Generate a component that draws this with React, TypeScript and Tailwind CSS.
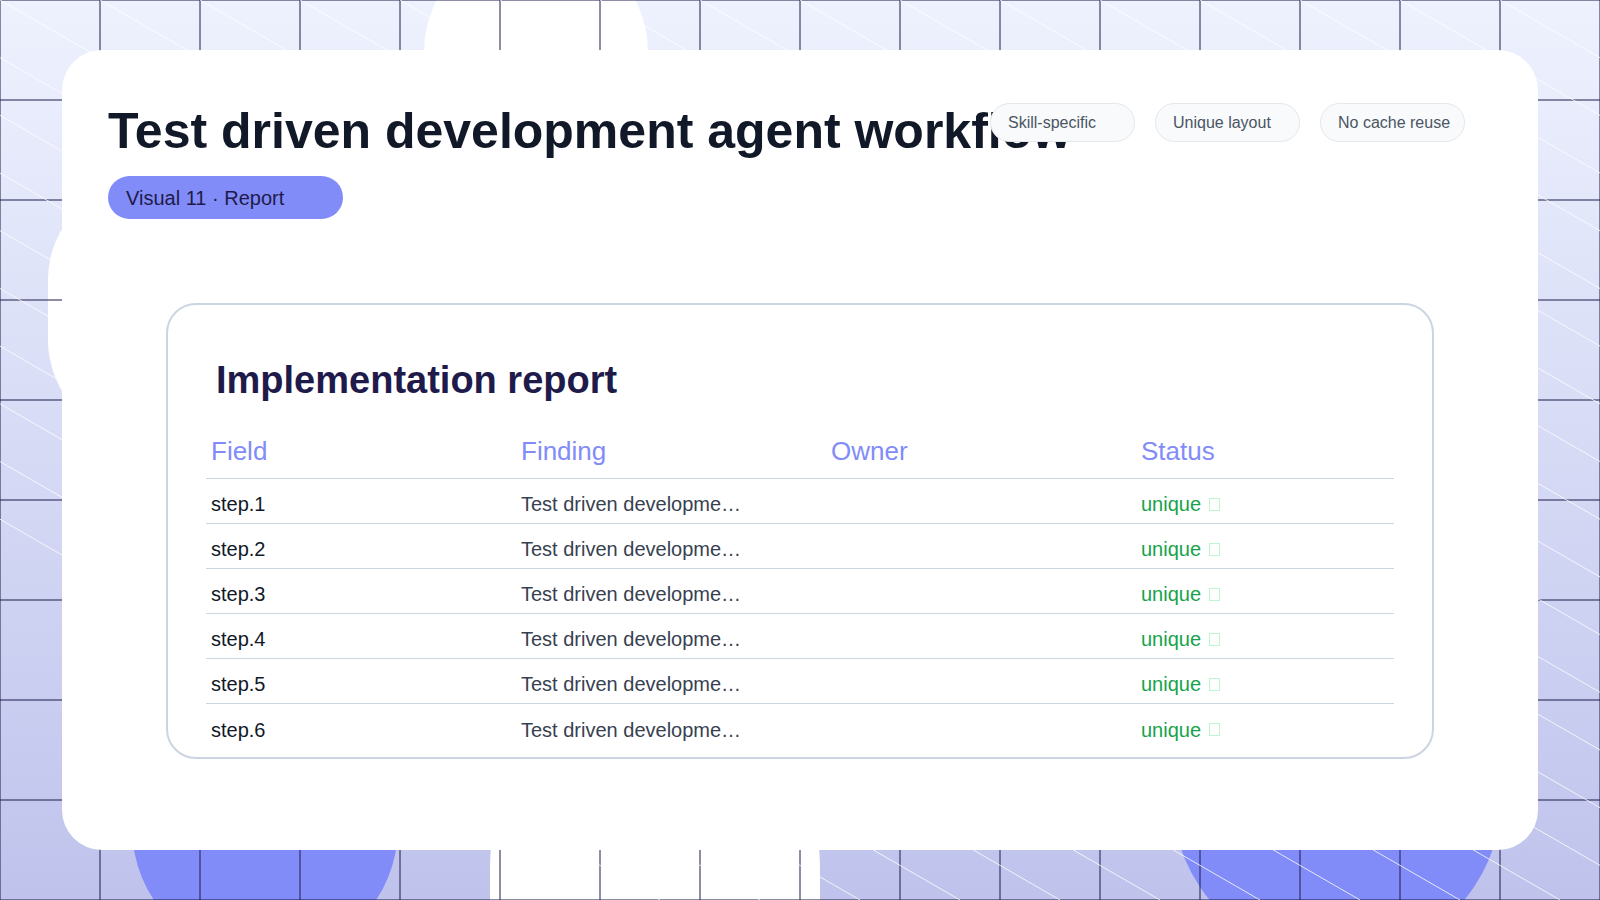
const rows = ['step.1', 'step.2', 'step.3', 'step.4', 'step.5', 'step.6']
const chips = ['Skill-specific', 'Unique layout', 'No cache reuse']

function Backdrop() {
  return (
    <div className="absolute inset-0 overflow-hidden bg-gradient-to-b from-[#eef2fe] to-[#bfc3ec]">
      <div className="absolute left-[424px] top-[-60px] h-[280px] w-[224px] rounded-full bg-white" />
      <div className="absolute left-[48px] top-[180px] h-[260px] w-[200px] rounded-full bg-white" />
      <div className="absolute left-[490px] top-[700px] h-[400px] w-[330px] rounded-full bg-white" />
      <div className="absolute left-[132px] top-[600px] h-[360px] w-[266px] rounded-full bg-[#818cf8]" />
      <div className="absolute left-[1172px] top-[600px] h-[360px] w-[330px] rounded-full bg-[#818cf8]" />
      <svg className="absolute inset-0" width="1600" height="900">
        {Array.from({ length: 17 }).map((_, i) => (
          <line key={'v' + i} x1={i * 100} y1={0} x2={i * 100} y2={900} stroke="#1e1b4b" strokeWidth="1" />
        ))}
        {Array.from({ length: 10 }).map((_, i) => (
          <line key={'h' + i} x1={0} y1={i * 100} x2={1600} y2={i * 100} stroke="#1e1b4b" strokeWidth="1" />
        ))}
        {Array.from({ length: 30 }).map((_, i) => (
          <line key={'d' + i} x1={i * 100 - 900} y1={0} x2={i * 100 - 900 + 1560} y2={900} stroke="#ffffff" strokeWidth="1" opacity="0.8" />
        ))}
      </svg>
    </div>
  )
}

export default function App() {
  return (
    <div className="relative h-[900px] w-[1600px] overflow-hidden font-[Liberation_Sans]">
      <Backdrop />
      <div className="relative pt-[50px] px-[62px]">
        <div className="relative h-[800px] rounded-[40px] bg-white">
          <div className="pl-[46px] pt-[56px]">
            <h1 className="whitespace-nowrap text-[50px] font-bold leading-none text-[#111827]">
              Test driven development agent workflow
            </h1>
            <div className="mt-[20px] inline-flex h-[43px] w-[235px] items-center rounded-full bg-[#818cf8] pl-[18px] text-[20px] text-[#1e1b4b]">
              Visual 11 · Report
            </div>
          </div>
          <div className="absolute right-[73px] top-[53px] flex gap-[20px]">
            {chips.map((c) => (
              <div key={c} className="flex h-[39px] w-[145px] items-center rounded-full border border-[#e5e7eb] bg-[#f8fafc] pl-[17px] text-[16px] text-[#4b5563]">
                {c}
              </div>
            ))}
          </div>
          <div className="mx-[104px] mt-[84px] rounded-[30px] border-2 border-[#cbd5e1] px-[38px] pb-[8px] pt-[56px]">
            <h2 className="pl-[10px] text-[38px] font-bold leading-none text-[#1e1b4b]">Implementation report</h2>
            <div className="mt-[30px] grid h-[50px] grid-cols-[310px_310px_310px_1fr] items-center border-b border-[#cbd5e1] pb-[4px] text-[26px] text-[#818cf8]">
              {['Field', 'Finding', 'Owner', 'Status'].map((h) => (
                <div key={h} className="pl-[5px]">{h}</div>
              ))}
            </div>
            {rows.map((r, i) => (
              <div key={r} className={'grid h-[45px] grid-cols-[310px_310px_310px_1fr] items-center pt-[6px] text-[20px] ' + (i < rows.length - 1 ? 'border-b border-[#cbd5e1]' : '')}>
                <div className="pl-[5px] text-[#111827]">{r}</div>
                <div className="truncate pl-[5px] pr-[80px] text-[#374151]">Test driven development agent workflow</div>
                <div />
                <div className="flex items-center gap-[8px] pl-[5px] text-[#16a34a]">
                  unique
                  <span className="inline-block h-[13px] w-[11px] border border-[#bbf7d0]" />
                </div>
              </div>
            ))}
          </div>
        </div>
      </div>
    </div>
  )
}
